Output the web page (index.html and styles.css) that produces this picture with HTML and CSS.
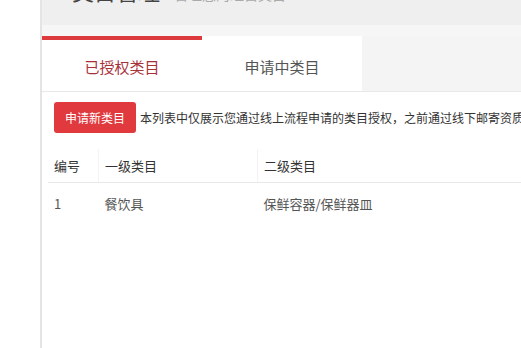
FILE: index.html
```html
<!DOCTYPE html>
<html lang="zh">
<head>
<meta charset="utf-8">
<link rel="stylesheet" href="styles.css">
</head>
<body>
<div class="page">
  <div class="side"></div>
  <div class="main">
    <div class="topbar"><span class="title">类目管理</span><span class="subtitle">管理您的经营类目</span></div>
    <div class="band"></div>
    <div class="tabs">
      <div class="tab active">已授权类目</div>
      <div class="tab">申请中类目</div>
    </div>
    <div class="content">
      <div class="toolbar">
        <button class="btn">申请新类目</button>
        <span class="desc">本列表中仅展示您通过线上流程申请的类目授权，之前通过线下邮寄资质申请的类目不在此列表中展示</span>
      </div>
      <table class="grid">
        <thead>
          <tr><th class="c1">编号</th><th class="c2">一级类目</th><th class="c3">二级类目</th></tr>
        </thead>
        <tbody>
          <tr><td class="c1">1</td><td class="c2">餐饮具</td><td class="c3">保鲜容器/保鲜器皿</td></tr>
        </tbody>
      </table>
    </div>
  </div>
</div>
</body>
</html>
```

FILE: styles.css
```css
html, body {
  margin: 0;
  padding: 0;
  background: #fff;
  font-family: "Noto Sans CJK SC", "Noto Sans", sans-serif;
  overflow: hidden;
}
.page {
  display: flex;
  width: 521px;
  height: 348px;
  overflow: hidden;
}
.side {
  width: 40px;
  flex: none;
  background: #fff;
  border-right: 2px solid #e4e4e4;
}
.main {
  flex: 1;
  min-width: 0;
  background: #fff;
  overflow: hidden;
}
.topbar {
  height: 25px;
  background: #efefef;
  overflow: hidden;
  white-space: nowrap;
  padding-left: 30px;
}
.title {
  display: inline-block;
  font-size: 22px;
  line-height: 22px;
  color: #444;
  margin-top: -21px;
  vertical-align: top;
}
.subtitle {
  display: inline-block;
  font-size: 14px;
  line-height: 14px;
  color: #aaa;
  margin-top: -13px;
  margin-left: 14px;
  vertical-align: top;
}
.band {
  height: 11px;
  background: #f6f6f6;
}
.tabs {
  display: flex;
  height: 56px;
  background: #f4f4f4;
  border-bottom: 1px solid #e8e8e8;
  box-sizing: border-box;
}
.tab {
  width: 160px;
  background: #fff;
  border-top: 4px solid transparent;
  display: flex;
  align-items: center;
  justify-content: center;
  font-size: 15px;
  color: #555;
  padding-top: 2px;
  box-sizing: border-box;
}
.tab.active {
  border-top-color: #dc3a3c;
  color: #a8323a;
}
.content {
  padding: 10px 0 0 12px;
}
.toolbar {
  display: flex;
  align-items: center;
  white-space: nowrap;
}
.btn {
  height: 31px;
  padding: 0 11px;
  border: none;
  border-radius: 3px;
  background: #e0393e;
  color: #fff;
  font-family: inherit;
  font-size: 12px;
  flex: none;
}
.desc {
  margin-left: 4px;
  font-size: 12px;
  color: #333;
}
.grid {
  margin-top: 16px;
  margin-left: -6px;
  border-collapse: collapse;
  width: 600px;
  font-size: 13px;
  table-layout: fixed;
}
.grid th {
  height: 33px;
  text-align: left;
  font-weight: normal;
  color: #333;
  padding: 0 0 0 6px;
  border-bottom: 1px solid #e8e8e8;
  border-left: 1px solid #f3f3f3;
}
.grid th.c1 { border-left: none; }
.grid td {
  height: 40px;
  padding: 0 0 2px 6px;
  color: #555;
}
.c1 { width: 44px; }
.c2 { width: 152px; }
```
